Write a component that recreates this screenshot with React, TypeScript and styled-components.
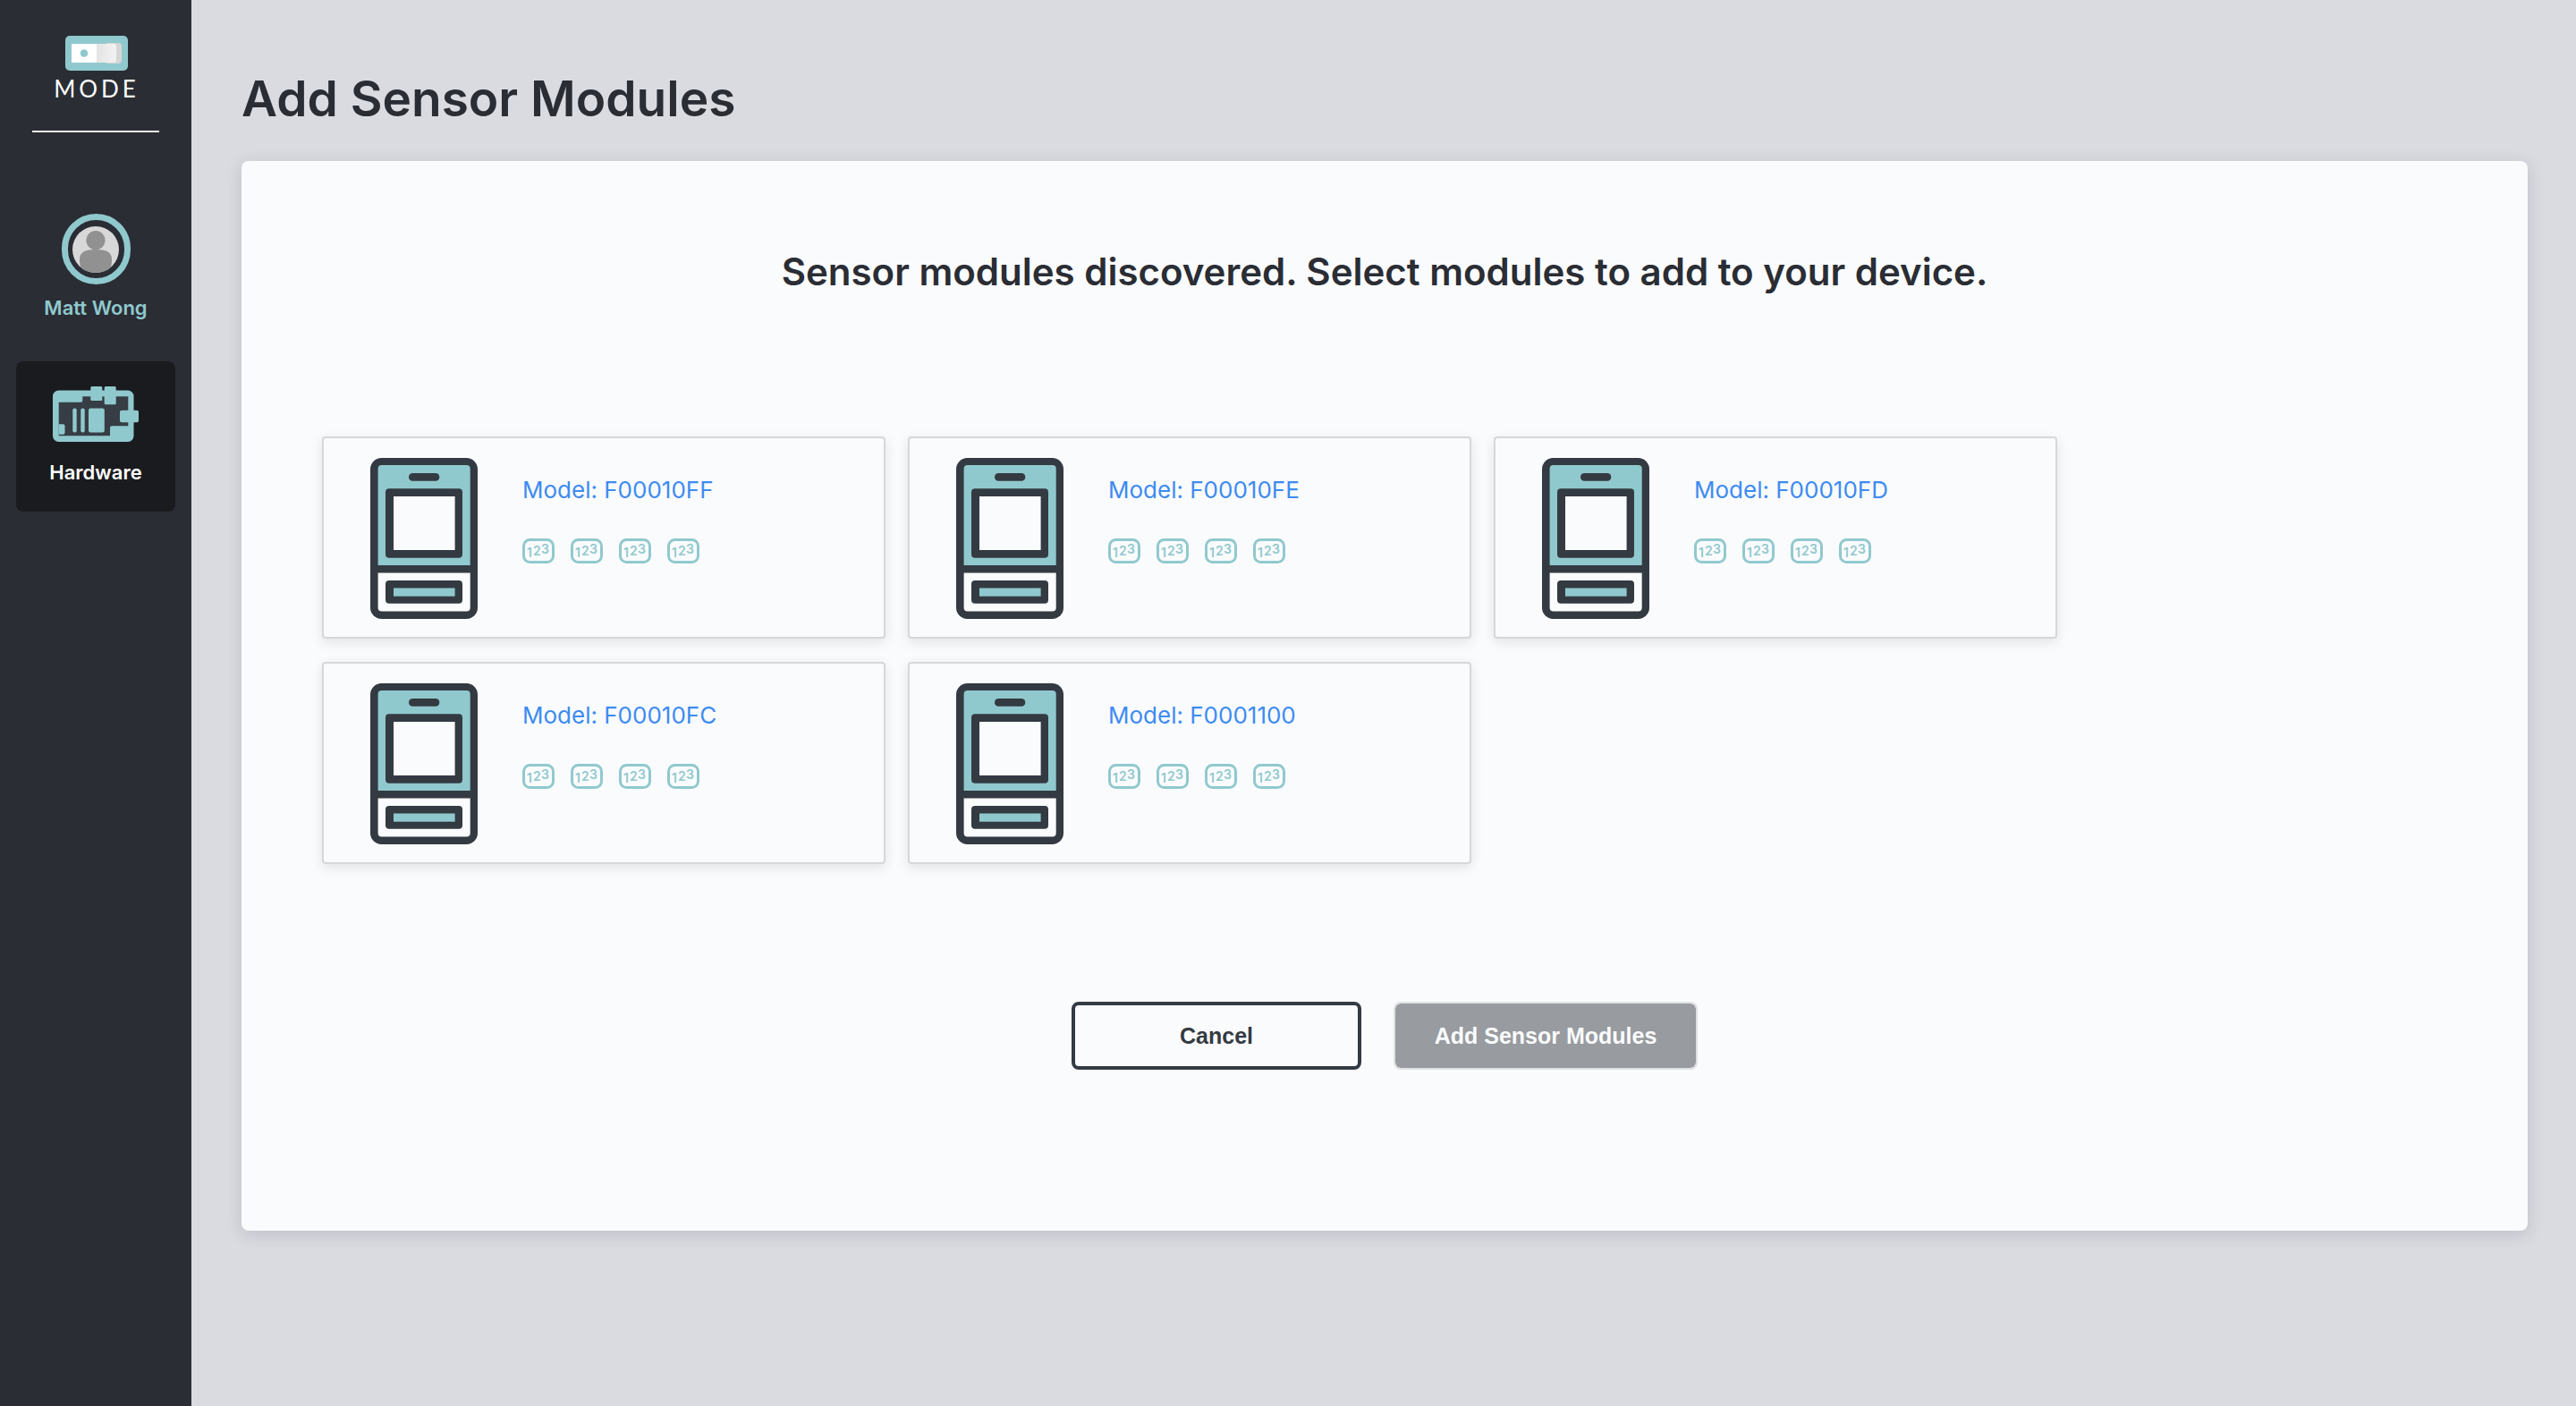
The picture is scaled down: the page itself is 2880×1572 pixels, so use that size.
import React, { useState } from "react";
import styled, { createGlobalStyle } from "styled-components";

const teal = "#90c9cd";
const ink = "#343a42";
const sans = `Inter, "Liberation Sans", sans-serif`;

const GlobalStyle = createGlobalStyle`
  *, *::before, *::after { box-sizing: border-box; }
  body { margin: 0; background: #dadbe0; font-family: ${sans}; color: #2a2d34; }
`;

const Page = styled.div`
  display: flex;
  min-height: 100vh;
`;

const Sidebar = styled.nav`
  flex: 0 0 214px;
  display: flex;
  flex-direction: column;
  align-items: center;
  padding: 40px 18px;
  background: #2a2d34;
`;

const Brand = styled.a`
  display: flex;
  flex-direction: column;
  align-items: center;
  gap: 4px;
  width: 142px;
  height: 108px;
  padding-left: 2px;
  border-bottom: 2px solid #f0ecf0;
  color: #ffffff;
  font: 400 26px/32px Lato, sans-serif;
  letter-spacing: 4px;
  text-decoration: none;
`;

const NavLink = styled.a<{ $active?: boolean }>`
  display: flex;
  flex-direction: column;
  align-items: center;
  width: 100%;
  border-radius: 8px;
  background: ${(p) => (p.$active ? "#1a1b1e" : "transparent")};
  color: ${(p) => (p.$active ? "#ffffff" : teal)};
  font-size: 22px;
  font-weight: 600;
  line-height: 28px;
  text-decoration: none;
`;

const ProfileLink = styled(NavLink)`
  gap: 12px;
  margin-top: 91px;
`;

const HardwareLink = styled(NavLink)`
  gap: 20px;
  margin-top: 46px;
  padding: 28px 0 30px;
`;

const AvatarRing = styled.span`
  display: grid;
  place-items: center;
  width: 77px;
  height: 79px;
  border: 7px solid ${teal};
  border-radius: 40px;
`;

const Main = styled.main`
  flex: 1;
  min-width: 0;
  padding: 76px 54px 76px 56px;
`;

const Title = styled.h1`
  margin: 0 0 36px;
  font-size: 55px;
  font-weight: 600;
  line-height: 68px;
`;

const Panel = styled.section`
  padding: 98px 90px 180px;
  border-radius: 8px;
  background: #fafbfd;
  box-shadow: 0 4px 18px rgba(50, 50, 80, 0.16);
`;

const Prompt = styled.h2`
  margin: 0 0 158px;
  font-size: 42px;
  font-weight: 600;
  line-height: 52px;
  text-align: center;
`;

const ModuleGrid = styled.div`
  display: grid;
  grid-template-columns: repeat(auto-fill, 630px);
  gap: 26px 25px;
`;

const ModuleCard = styled.button`
  display: flex;
  align-items: flex-start;
  gap: 50px;
  height: 226px;
  padding: 22px 52px;
  border: 2px solid #d6d7d9;
  border-radius: 4px;
  background: #fafbfd;
  box-shadow: 0 4px 14px rgba(0, 0, 0, 0.1);
  font-family: inherit;
  text-align: left;
  cursor: pointer;
`;

const ModuleInfo = styled.span`
  display: flex;
  flex-direction: column;
  gap: 38px;
  padding-top: 20px;
`;

const ModelName = styled.span`
  color: #3d8bf2;
  font-size: 26px;
  line-height: 32px;
`;

const SensorList = styled.span`
  display: flex;
  gap: 18px;
`;

const SensorSvg = styled.svg`
  display: block;
  text {
    fill: ${teal};
    font: 600 14px ${sans};
  }
`;

const Actions = styled.div`
  display: flex;
  justify-content: center;
  gap: 36px;
  margin-top: 154px;
`;

const ActionButton = styled.button<{ $primary?: boolean }>`
  min-width: ${(p) => (p.$primary ? 340 : 324)}px;
  height: 76px;
  border: ${(p) => (p.$primary ? "2px solid #e0e1e4" : `4px solid ${ink}`)};
  border-radius: 8px;
  background: ${(p) => (p.$primary ? "#989b9f" : "transparent")};
  background-clip: padding-box;
  color: ${(p) => (p.$primary ? "#fafbfd" : ink)};
  font: 700 25px "Liberation Sans", sans-serif;
  cursor: pointer;
`;

function LogoMark() {
  return (
    <svg width="70" height="39" viewBox="0 0 70 39" aria-hidden="true">
      <defs>
        <linearGradient id="slot" x1="0" x2="1">
          <stop offset="0" stopColor="#e4e4e4" />
          <stop offset="1" stopColor="#f2f2f2" />
        </linearGradient>
      </defs>
      <rect width="70" height="39" rx="5" fill={teal} />
      <rect x="44" y="8" width="19" height="23" rx="4" fill="#d6d6d6" />
      <path d="M35 9H54a3 3 0 0 1 3 3V27a3 3 0 0 1-3 3H35Z" fill="url(#slot)" />
      <rect x="7" y="9" width="28" height="21" fill="#ffffff" />
      <circle cx="21" cy="19.5" r="4.3" fill={teal} />
    </svg>
  );
}

function Avatar() {
  return (
    <svg width="52" height="52" viewBox="0 0 52 52" aria-hidden="true">
      <defs>
        <clipPath id="face">
          <circle cx="26" cy="26" r="26" />
        </clipPath>
      </defs>
      <g clipPath="url(#face)">
        <rect width="52" height="52" fill="#d8d8d8" />
        <circle cx="26" cy="15.700" r="10.600" fill="#919191" />
        <path d="M8 37C8 29 14 26 26 26S44 29 44 37C44 45 42 52 36 52H16C10 52 8 45 8 37Z" fill="#919191" />
      </g>
    </svg>
  );
}

function BoardIcon() {
  return (
    <svg width="96" height="62" viewBox="0 0 96 62" aria-hidden="true" fill={teal}>
      <rect y="4.500" width="90.500" height="57.500" rx="6.500" />
      <path
        d="M33.300 11.300H84.300V44.300H66a2 2 0 0 0-2 2V55.300H6.700V17.700H31.300a2 2 0 0 0 2-2Z"
        fill="#363d45"
      />
      <path d="M6.700 42.300H11.500a2 2 0 0 1 2 2V51.700a2 2 0 0 1-2 2H6.700Z" />
      <rect x="42.300" width="13" height="16" rx="1.500" />
      <rect x="57.700" width="13" height="20.300" rx="1.500" />
      <rect x="75" y="26.700" width="21" height="13.600" rx="2" />
      <rect x="22.300" y="24.500" width="4.400" height="27" rx="2" />
      <rect x="31.300" y="24.500" width="4.400" height="27" rx="2" />
      <rect x="40" y="24.500" width="17.800" height="27" rx="2.200" />
    </svg>
  );
}

function ModuleIcon() {
  return (
    <svg width="120" height="180" viewBox="0 0 120 180" aria-hidden="true" fill={ink}>
      <rect width="120" height="180" rx="12.500" />
      <path d="M12.600 8H107.700a4 4 0 0 1 4 4V120H8.600V12a4 4 0 0 1 4-4Z" fill={teal} />
      <path d="M8.600 128.600H111.700V167.600a4 4 0 0 1-4 4H12.600a4 4 0 0 1-4-4Z" fill="#fafbfd" />
      <rect x="43" y="17" width="34.300" height="8.700" rx="4.300" />
      <rect x="17" y="34.300" width="86" height="77.400" rx="4" />
      <rect x="26" y="43" width="68.600" height="60" fill="#fafbfd" />
      <rect x="17" y="137" width="86" height="25.700" rx="4" />
      <rect x="26" y="145.500" width="68.600" height="9.200" fill={teal} />
    </svg>
  );
}

function SensorIcon() {
  return (
    <SensorSvg width="36" height="28" viewBox="0 0 36 28" aria-hidden="true">
      <rect x="1.500" y="1.500" width="33" height="25" rx="7" fill="none" stroke={teal} strokeWidth="3" />
      <text x="5" y="21">1</text>
      <text x="12" y="19">2</text>
      <text x="21" y="17">3</text>
    </SensorSvg>
  );
}

const modules = ["F00010FF", "F00010FE", "F00010FD", "F00010FC", "F0001100"];
const sensors = [0, 1, 2, 3];

export default function App() {
  const [selected, setSelected] = useState<string[]>([]);

  const toggle = (id: string) =>
    setSelected((ids) => (ids.includes(id) ? ids.filter((x) => x !== id) : [...ids, id]));

  return (
    <Page>
      <GlobalStyle />
      <Sidebar>
        <Brand href="#home">
          <LogoMark />
          MODE
        </Brand>
        <ProfileLink href="#profile">
          <AvatarRing>
            <Avatar />
          </AvatarRing>
          Matt Wong
        </ProfileLink>
        <HardwareLink href="#hardware" $active>
          <BoardIcon />
          Hardware
        </HardwareLink>
      </Sidebar>
      <Main>
        <Title>Add Sensor Modules</Title>
        <Panel>
          <Prompt>Sensor modules discovered. Select modules to add to your device.</Prompt>
          <ModuleGrid>
            {modules.map((id) => (
              <ModuleCard key={id} type="button" aria-pressed={selected.includes(id)} onClick={() => toggle(id)}>
                <ModuleIcon />
                <ModuleInfo>
                  <ModelName>Model: {id}</ModelName>
                  <SensorList>
                    {sensors.map((n) => (
                      <SensorIcon key={n} />
                    ))}
                  </SensorList>
                </ModuleInfo>
              </ModuleCard>
            ))}
          </ModuleGrid>
          <Actions>
            <ActionButton type="button">Cancel</ActionButton>
            <ActionButton type="button" $primary>
              Add Sensor Modules
            </ActionButton>
          </Actions>
        </Panel>
      </Main>
    </Page>
  );
}
